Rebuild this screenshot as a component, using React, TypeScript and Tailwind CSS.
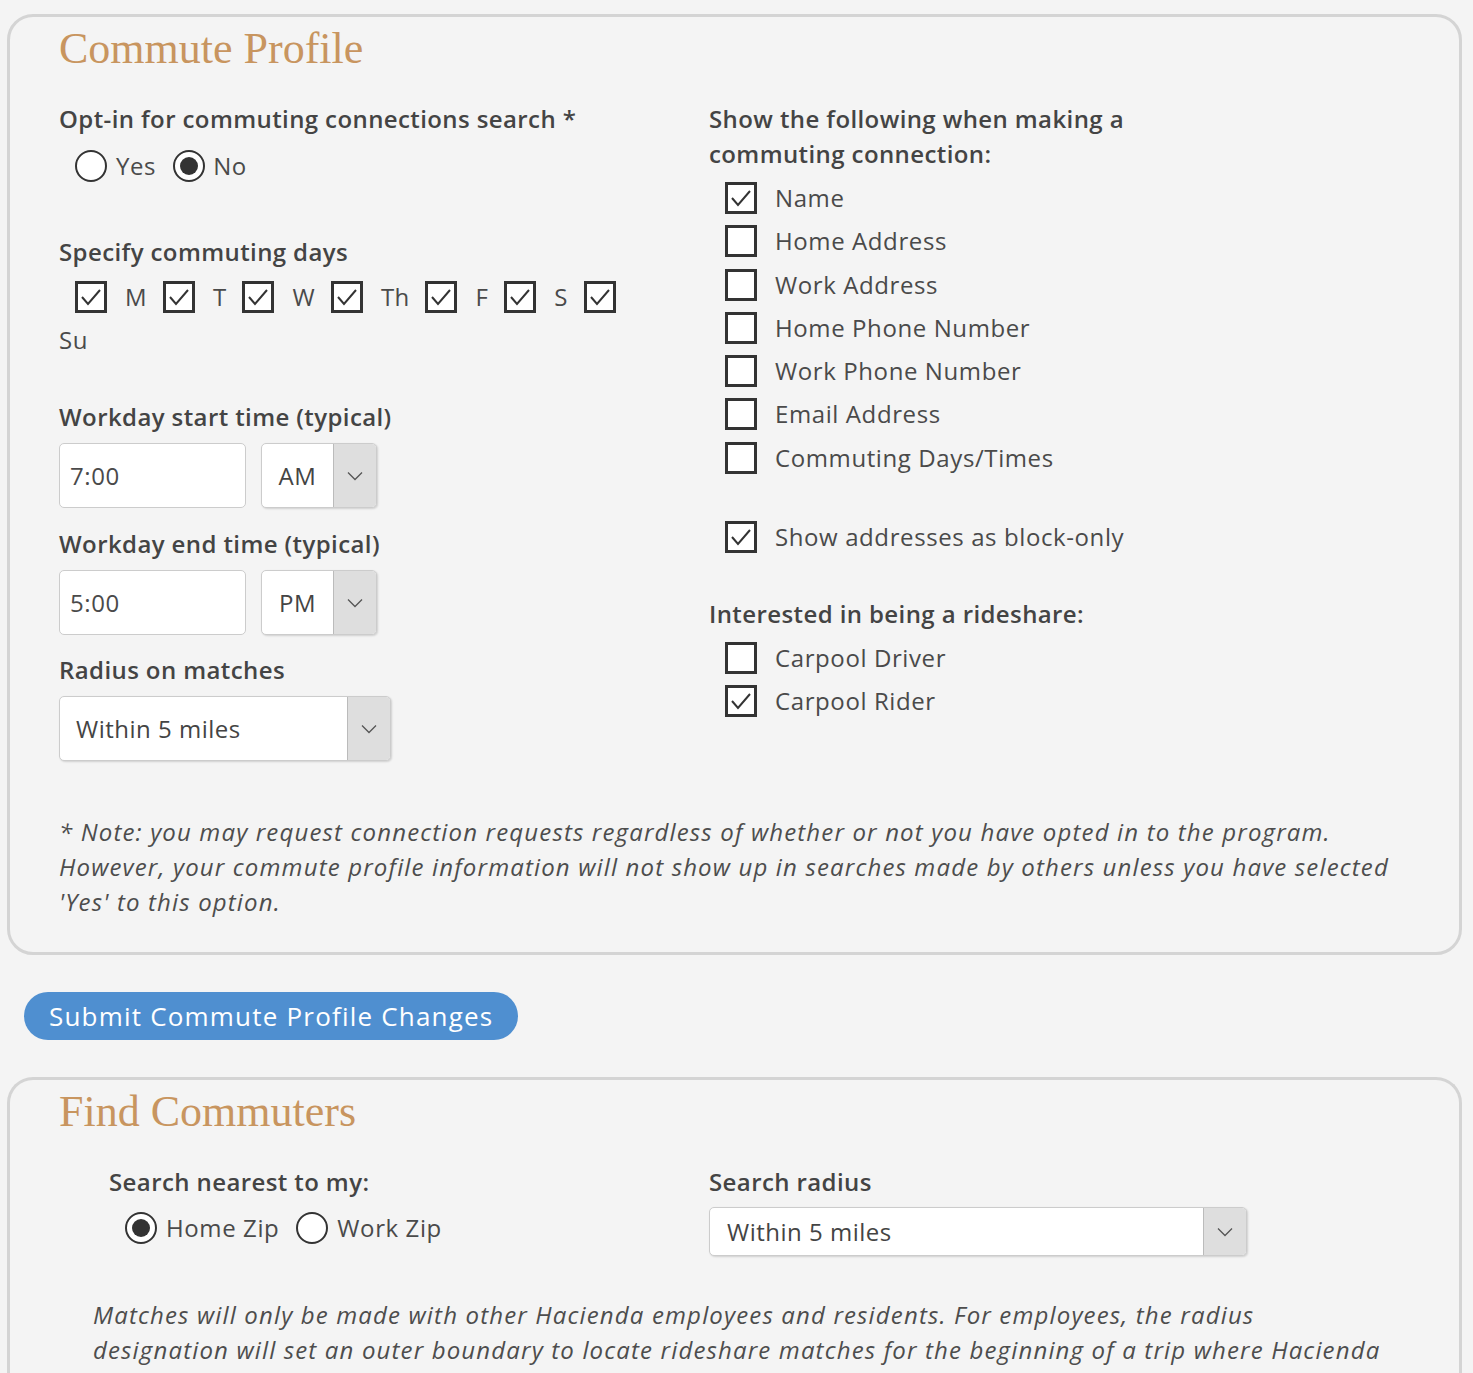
import { useState } from 'react';

const FONT = "font-['Open_Sans',_'Liberation_Sans',_sans-serif]";

const SHOW_FIELDS = [
  { key: 'name', label: 'Name', checked: true },
  { key: 'homeAddress', label: 'Home Address', checked: false },
  { key: 'workAddress', label: 'Work Address', checked: false },
  { key: 'homePhone', label: 'Home Phone Number', checked: false },
  { key: 'workPhone', label: 'Work Phone Number', checked: false },
  { key: 'email', label: 'Email Address', checked: false },
  { key: 'days', label: 'Commuting Days/Times', checked: false },
];

const DAYS = ['M', 'T', 'W', 'Th', 'F', 'S'];

const Check = ({ checked }: { checked: boolean }) => (
  <span className="inline-flex w-[32px] h-[32px] shrink-0 border-[3px] border-[#333] bg-white items-center justify-center">
    {checked && (
      <svg width="24" height="24" viewBox="0 0 24 24" fill="none">
        <polyline points="3,12 9,19 21,5" stroke="#333" strokeWidth="2" />
      </svg>
    )}
  </span>
);

const Radio = ({ checked }: { checked: boolean }) => (
  <span className="inline-flex w-[32px] h-[32px] shrink-0 rounded-full border-[2.5px] border-[#333] bg-white items-center justify-center">
    {checked && <span className="w-[18px] h-[18px] rounded-full bg-[#333]" />}
  </span>
);

const Arrow = () => (
  <svg width="16" height="10" viewBox="0 0 16 10" fill="none">
    <polyline points="1,1.5 8,8.5 15,1.5" stroke="#555" strokeWidth="1.3" />
  </svg>
);

const Select = ({ value, className, textClass }: { value: string; className: string; textClass: string }) => (
  <div className={`flex bg-white border border-[#ccc] rounded-[5px] overflow-hidden shadow-[1px_1px_2px_rgba(0,0,0,0.15)] ${className}`}>
    <div className={`flex-1 flex items-center text-[24px] tracking-[0.5px] text-[#444] ${textClass}`}>{value}</div>
    <div className="w-[43px] bg-[#dedede] border-l border-[#bbb] flex items-center justify-center">
      <Arrow />
    </div>
  </div>
);

const Label = ({ children, className = '' }: { children: React.ReactNode; className?: string }) => (
  <div className={`text-[24px] font-semibold tracking-[0.4px] text-[#444] leading-[35px] ${className}`}>{children}</div>
);

const CheckRow = ({ label, checked }: { label: string; checked: boolean }) => (
  <div className="flex items-center gap-[18px] h-[32px]">
    <Check checked={checked} />
    <span>{label}</span>
  </div>
);

const TimeInput = ({ value }: { value: string }) => (
  <div className="w-[187px] h-[65px] bg-white border border-[#ccc] rounded-[5px] flex items-center pl-[10px]">{value}</div>
);

const App = () => {
  const [optIn] = useState<'yes' | 'no'>('no');

  return (
    <div className={`min-h-[1373px] bg-[#f4f4f4] pt-[14px] pl-[7px] pr-[11px] ${FONT} text-[24px] tracking-[0.6px] text-[#4a4a4a]`}>
      {/* Commute Profile */}
      <div className="border-[3px] border-[#d4d4d4] rounded-[26px] pl-[49px] pr-[40px] pt-[7px] pb-[33px]">
        <h2 className="font-['Liberation_Serif',_serif] text-[44px] tracking-normal text-[#c8955f] leading-[50px]">Commute Profile</h2>
        <div className="grid grid-cols-[650px_1fr] mt-[27px]">
          <div>
            <Label>Opt-in for commuting connections search *</Label>
            <div className="flex items-center pl-[16px] mt-[14px] h-[32px]">
              <Radio checked={optIn === 'yes'} />
              <span className="ml-[9px] mr-[17px]">Yes</span>
              <Radio checked={optIn === 'no'} />
              <span className="ml-[8px]">No</span>
            </div>

            <Label className="mt-[52px]">Specify commuting days</Label>
            <div className="flex items-center pl-[16px] mt-[12px] h-[32px] tracking-[0.3px]">
              {DAYS.map((d) => (
                <div key={d} className="flex items-center">
                  <Check checked />
                  <span className="ml-[18px] mr-[16px]">{d}</span>
                </div>
              ))}
              <Check checked />
            </div>
            <div className="mt-[12px] leading-[30px]">Su</div>

            <Label className="mt-[44px]">Workday start time (typical)</Label>
            <div className="flex gap-[15px] mt-[9px]">
              <TimeInput value="7:00" />
              <Select value="AM" className="w-[116px] h-[65px]" textClass="justify-center" />
            </div>

            <Label className="mt-[18px]">Workday end time (typical)</Label>
            <div className="flex gap-[15px] mt-[9px]">
              <TimeInput value="5:00" />
              <Select value="PM" className="w-[116px] h-[65px]" textClass="justify-center" />
            </div>

            <Label className="mt-[17px]">Radius on matches</Label>
            <Select value="Within 5 miles" className="w-[332px] h-[65px] mt-[9px]" textClass="pl-[16px]" />
          </div>

          <div>
            <Label>
              Show the following when making a<br />commuting connection:
            </Label>
            <div className="mt-[11px] pl-[16px] flex flex-col gap-[11.3px]">
              {SHOW_FIELDS.map((f) => (
                <CheckRow key={f.key} label={f.label} checked={f.checked} />
              ))}
            </div>
            <div className="mt-[47px] pl-[16px]">
              <CheckRow label="Show addresses as block-only" checked />
            </div>
            <Label className="mt-[43px]">Interested in being a rideshare:</Label>
            <div className="mt-[11px] pl-[16px] flex flex-col gap-[11.3px]">
              <CheckRow label="Carpool Driver" checked={false} />
              <CheckRow label="Carpool Rider" checked />
            </div>
          </div>
        </div>

        <p className="mt-[53px] italic tracking-[1.15px] leading-[35px] text-[#4d4d4d]">
          * Note: you may request connection requests regardless of whether or not you have opted in to the program.
          However, your commute profile information will not show up in searches made by others unless you have selected
          'Yes' to this option.
        </p>
      </div>

      <button className="mt-[37px] ml-[17px] h-[48px] px-[25px] rounded-full bg-[#4f8fd0] text-white text-[26px] tracking-[1.2px]">
        Submit Commute Profile Changes
      </button>

      {/* Find Commuters */}
      <div className="mt-[37px] border-[3px] border-b-0 border-[#d4d4d4] rounded-t-[26px] pl-[49px] pr-[40px] pt-[7px] pb-[30px]">
        <h2 className="font-['Liberation_Serif',_serif] text-[44px] tracking-normal text-[#c8955f] leading-[50px]">Find Commuters</h2>
        <div className="grid grid-cols-[650px_1fr] mt-[27px]">
          <div className="pl-[50px]">
            <Label>Search nearest to my:</Label>
            <div className="flex items-center pl-[16px] mt-[13px] h-[32px]">
              <Radio checked />
              <span className="ml-[9px] mr-[17px]">Home Zip</span>
              <Radio checked={false} />
              <span className="ml-[9px]">Work Zip</span>
            </div>
          </div>
          <div>
            <Label>Search radius</Label>
            <Select value="Within 5 miles" className="w-[538px] h-[49px] mt-[8px]" textClass="pl-[17px]" />
          </div>
        </div>
        <p className="mt-[41px] pl-[34px] pr-[34px] italic tracking-[1.15px] leading-[35px] text-[#4d4d4d]">
          Matches will only be made with other Hacienda employees and residents. For employees, the radius designation
          will set an outer boundary to locate rideshare matches for the beginning of a trip where Hacienda is the end
          point.
        </p>
      </div>
    </div>
  );
};

export default App;
